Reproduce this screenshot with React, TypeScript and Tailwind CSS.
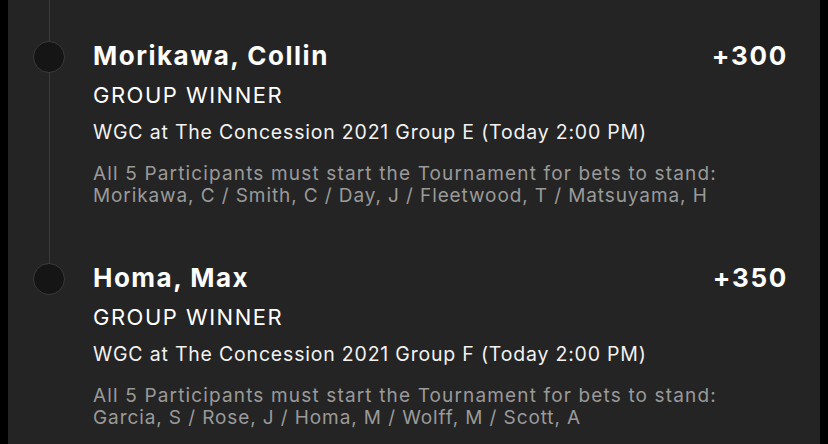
const bets = [
  {
    name: "Morikawa, Collin",
    odds: "+300",
    market: "GROUP WINNER",
    event: "WGC at The Concession 2021 Group E (Today 2:00 PM)",
    note: "All 5 Participants must start the Tournament for bets to stand:",
    players: "Morikawa, C / Smith, C / Day, J / Fleetwood, T / Matsuyama, H",
  },
  {
    name: "Homa, Max",
    odds: "+350",
    market: "GROUP WINNER",
    event: "WGC at The Concession 2021 Group F (Today 2:00 PM)",
    note: "All 5 Participants must start the Tournament for bets to stand:",
    players: "Garcia, S / Rose, J / Homa, M / Wolff, M / Scott, A",
  },
];

function BetLeg({ bet, last }: { bet: (typeof bets)[number]; last: boolean }) {
  return (
    <div className="flex gap-[28px]">
      {/* timeline */}
      <div className="flex w-[32px] shrink-0 flex-col">
        <div className="ml-[16px] h-[41px] w-px bg-[#3b3b3b]" />
        <div className="h-[32px] w-[32px] rounded-full border border-[#3a3a3a] bg-[#151515]" />
        {!last && <div className="ml-[16px] w-px flex-1 bg-[#3b3b3b]" />}
      </div>

      <div className="flex-1 pt-[40px] pb-[15px]">
        <div className="flex items-start justify-between">
          <div className="text-[26px] leading-[32px] font-bold tracking-[1.5px] text-white">{bet.name}</div>
          <div className="text-[26px] leading-[32px] font-bold tracking-[1.7px] text-white">{bet.odds}</div>
        </div>
        <div className="mt-[9px] text-[22px] leading-[28px] tracking-[1.5px] text-white">{bet.market}</div>
        <div className="mt-[11px] text-[19.5px] leading-[24px] tracking-[0.8px] text-[#f2f2f2]">{bet.event}</div>
        <div className="mt-[19px] text-[19px] leading-[22px] whitespace-nowrap text-[#9a9a9a]">
          <div className="tracking-[1.15px]">{bet.note}</div>
          <div className="tracking-[0.9px]">{bet.players}</div>
        </div>
      </div>
    </div>
  );
}

export default function App() {
  return (
    <div
      className="flex h-[444px] w-[828px] overflow-hidden bg-black"
      style={{ fontFamily: "Inter, 'Noto Sans', sans-serif" }}
    >
      <div className="ml-[8px] h-full w-[812px] bg-[#242424] pl-[25px] pr-[32px]">
        {bets.map((b, i) => (
          <BetLeg key={i} bet={b} last={i === bets.length - 1} />
        ))}
      </div>
    </div>
  );
}
